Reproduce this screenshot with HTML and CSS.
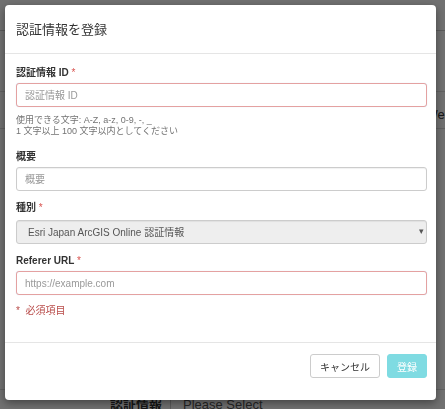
FILE: index.html
```html
<!DOCTYPE html>
<html lang="ja">
<head>
    <meta charset="UTF-8">
    <meta name="viewport" content="width=device-width, initial-scale=1.0">
    <title>認証情報を登録</title>
    <link rel="stylesheet" href="styles.css">
</head>
<body>
    <!-- page underneath the dialog -->
    <div class="page">
        <div class="page-bar"></div>
        <div class="page-row page-row-top"><span class="page-cut">Web</span></div>
        <div class="page-row page-row-bottom">
            <span class="page-key">認証情報</span>
            <span class="page-value">Please Select</span>
        </div>
    </div>

    <div class="backdrop">
        <div class="modal">
            <div class="modal-header">
                <h4 class="modal-title">認証情報を登録</h4>
            </div>
            <form class="modal-body" id="credential-form">
                <div class="form-group">
                    <label for="cred-id">認証情報 ID <span class="req">*</span></label>
                    <input type="text" id="cred-id" class="form-control has-error" placeholder="認証情報 ID" autofocus>
                    <p class="help-block">使用できる文字: A-Z, a-z, 0-9, -, _<br>1 文字以上 100 文字以内としてください</p>
                </div>
                <div class="form-group">
                    <label for="cred-desc">概要</label>
                    <input type="text" id="cred-desc" class="form-control" placeholder="概要">
                </div>
                <div class="form-group">
                    <label for="cred-type">種別 <span class="req">*</span></label>
                    <div class="select-wrap">
                        <select id="cred-type" class="form-control" disabled>
                            <option>Esri Japan ArcGIS Online 認証情報</option>
                        </select>
                    </div>
                </div>
                <div class="form-group">
                    <label for="cred-url">Referer URL <span class="req">*</span></label>
                    <input type="text" id="cred-url" class="form-control has-error" placeholder="https://example.com">
                </div>
                <p class="required-note">* &nbsp;必須項目</p>
            </form>
            <div class="modal-footer">
                <button type="button" class="btn btn-default">キャンセル</button>
                <button type="submit" form="credential-form" class="btn btn-info" disabled>登録</button>
            </div>
        </div>
    </div>
</body>
</html>
```

FILE: styles.css
```css
* {
    box-sizing: border-box;
}

body {
    margin: 0;
    width: 445px;
    height: 409px;
    overflow: hidden;
    font-family: "Liberation Sans", Arial, "Noto Sans CJK JP", sans-serif;
    font-size: 10px;
    color: #333;
    background: #fff;
}

/* background page */
.page {
    height: 409px;
    overflow: hidden;
}

.page-bar {
    height: 31px;
    border-bottom: 1px solid #ccc;
}

.page-row {
    display: flex;
    align-items: center;
}

.page-row-top {
    margin-top: 60px;
    height: 38px;
    padding-top: 9px;
    border-top: 1px solid #ddd;
    border-bottom: 1px solid #ddd;
    justify-content: flex-end;
}

.page-cut {
    font-size: 13px;
    margin-right: -7px;
    color: #333;
}

.page-row-bottom {
    margin-top: 260px;
    height: 30px;
    border-top: 1px solid #ddd;
}

.page-key {
    width: 171px;
    padding-left: 110px;
    font-weight: bold;
    font-size: 13px;
    border-right: 1px solid #ccc;
    line-height: 30px;
}

.page-value {
    padding-left: 12px;
    font-size: 13px;
    color: #555;
}

/* dialog */
.backdrop {
    position: fixed;
    inset: 0;
    background: rgba(0, 0, 0, 0.56);
    padding: 5px 10px 0 5px;
}

.modal {
    width: 431px;
    height: 395px;
    background: #fff;
    border-radius: 4px;
    box-shadow: 0 3px 8px rgba(0, 0, 0, 0.4);
    display: flex;
    flex-direction: column;
}

.modal-header {
    padding: 12px 11px 10px;
    border-bottom: 1px solid #e5e5e5;
}

.modal-title {
    margin: 0;
    font-size: 13px;
    font-weight: normal;
    line-height: 26px;
    color: #333;
}

.modal-body {
    flex: 1;
    margin: 0;
    padding: 12px 9px 0 11px;
}

.form-group {
    margin-bottom: 10px;
}

.form-group label {
    display: block;
    font-weight: bold;
    line-height: 14px;
    margin-bottom: 3px;
    color: #333;
}

.req {
    color: #d9534f;
    font-weight: normal;
}

.form-control {
    display: block;
    width: 100%;
    height: 24px;
    padding: 0 8px;
    font-family: inherit;
    font-size: 10px;
    color: #555;
    background: #fff;
    border: 1px solid #ccc;
    border-radius: 3px;
    box-shadow: inset 0 1px 1px rgba(0, 0, 0, 0.06);
    outline: none;
}

.form-control::placeholder {
    color: #999;
}

.form-control.has-error {
    border-color: #e4a1a1;
    box-shadow: 0 0 1px rgba(170, 200, 230, 0.6);
}

.help-block {
    margin: 8px 0 13px;
    font-size: 9px;
    line-height: 11px;
    color: #737373;
}

.select-wrap {
    position: relative;
    margin-top: 5px;
}

.select-wrap select {
    appearance: none;
    padding-left: 11px;
    height: 24px;
    background: #eee;
    color: #555;
    opacity: 1;
}

.select-wrap::after {
    content: "▾";
    position: absolute;
    right: 3px;
    top: 6px;
    font-size: 9px;
    color: #555;
}

.required-note {
    margin: 8px 0 0;
    line-height: 12px;
    color: #b84a48;
}

.modal-footer {
    display: flex;
    justify-content: flex-end;
    gap: 7px;
    padding: 11px 9px 22px;
    border-top: 1px solid #e5e5e5;
}

.btn {
    height: 24px;
    padding: 0 9px;
    font-family: inherit;
    font-size: 10px;
    border-radius: 3px;
    border: 1px solid transparent;
}

.btn-default {
    background: #fff;
    border-color: #ccc;
    color: #333;
}

.btn-info {
    background: #7fdbe2;
    border-color: #7fdbe2;
    color: #fff;
}
```
